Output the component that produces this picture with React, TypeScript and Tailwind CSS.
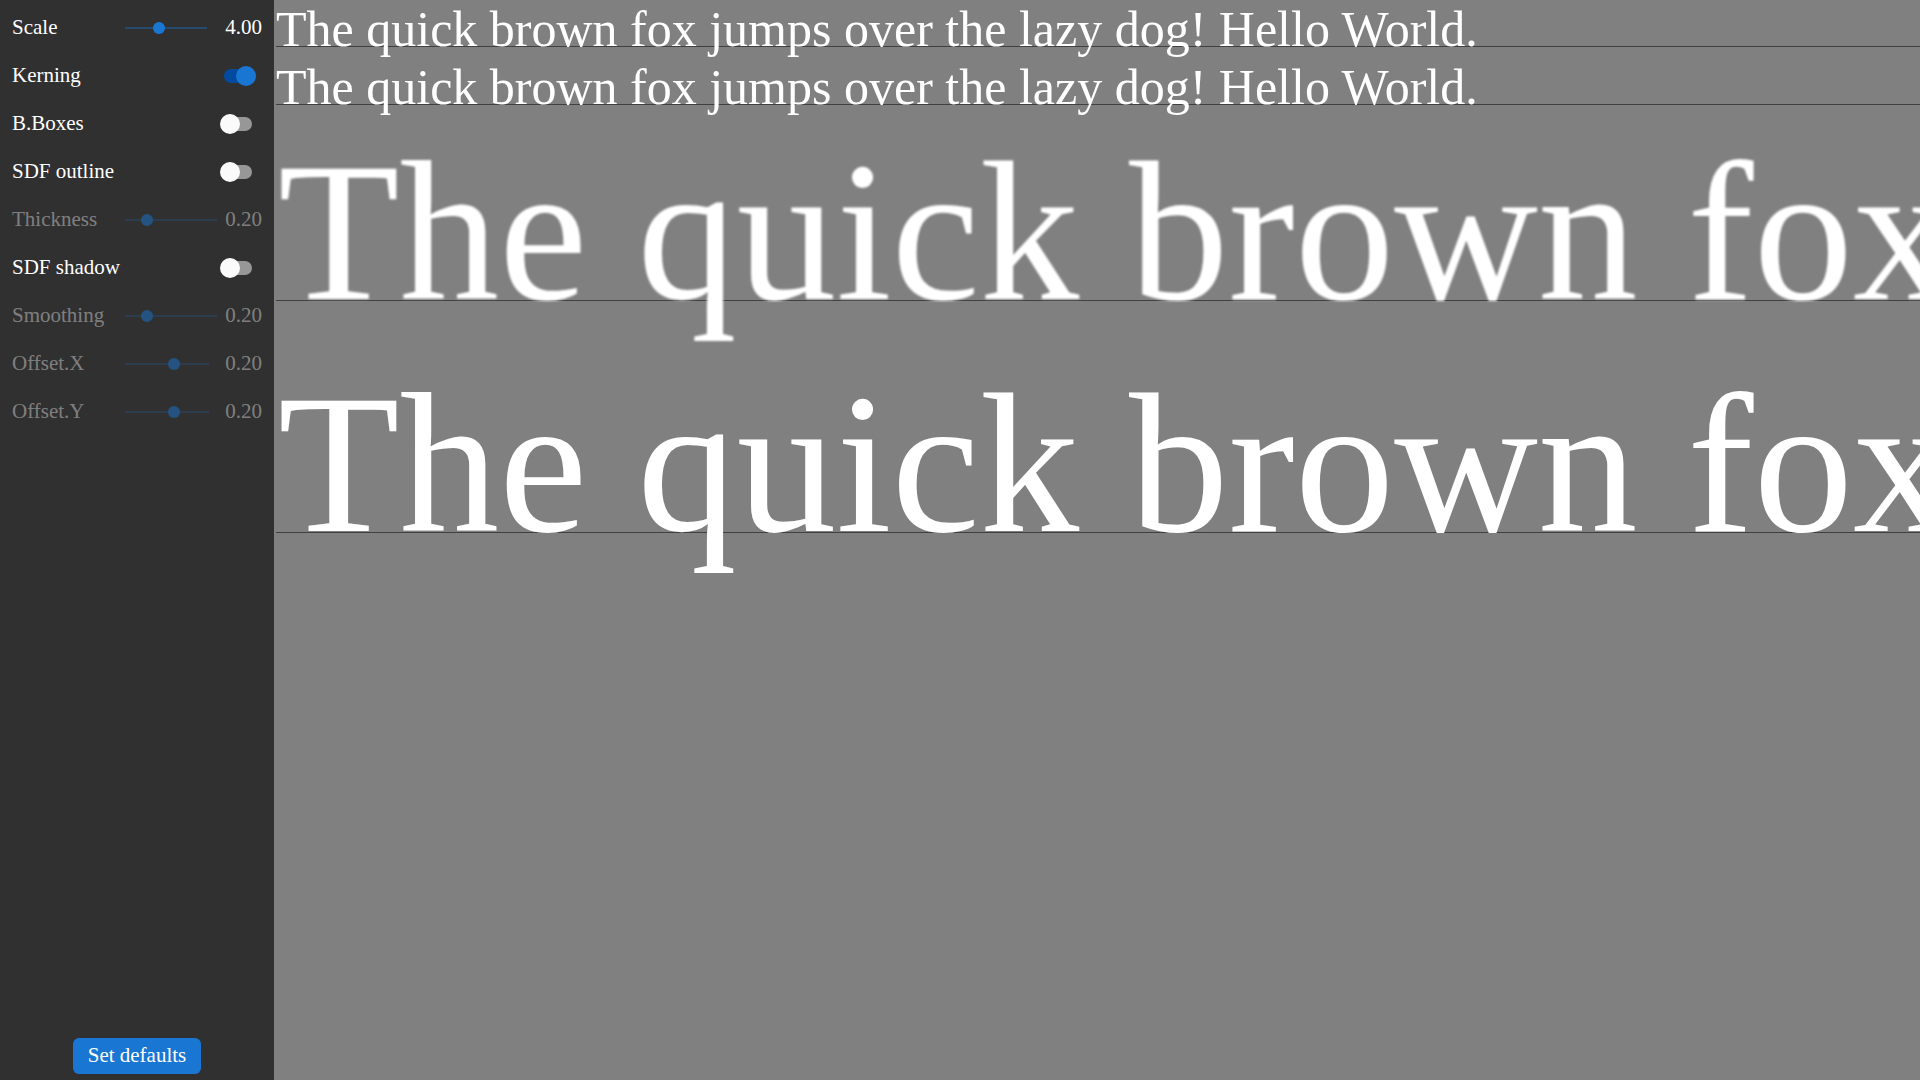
import { useState } from "react";

const SAMPLE = "The quick brown fox jumps over the lazy dog! Hello World.";

function SliderRow({
  id,
  label,
  value,
  min,
  max,
  width,
  disabled = false,
  onChange,
}: {
  id: string;
  label: string;
  value: number;
  min: number;
  max: number;
  width: string;
  disabled?: boolean;
  onChange: (v: number) => void;
}) {
  return (
    <div className={`flex h-12 items-center ${disabled ? "text-white/40" : "text-white"}`}>
      <label htmlFor={id} className="w-[113px] pb-0.5">
        {label}
      </label>
      <input
        id={id}
        type="range"
        min={min}
        max={max}
        step={0.01}
        value={value}
        disabled={disabled}
        onChange={(e) => onChange(Number(e.target.value))}
        className={`h-3 appearance-none bg-transparent disabled:opacity-50 [&::-webkit-slider-runnable-track]:h-0.5 [&::-webkit-slider-runnable-track]:bg-[#274b6e] [&::-webkit-slider-thumb]:-mt-[5px] [&::-webkit-slider-thumb]:size-3 [&::-webkit-slider-thumb]:appearance-none [&::-webkit-slider-thumb]:rounded-full [&::-webkit-slider-thumb]:bg-[#1976d2] ${width}`}
      />
      <output htmlFor={id} className="ml-auto pb-0.5">
        {value.toFixed(2)}
      </output>
    </div>
  );
}

function SwitchRow({
  id,
  label,
  checked,
  onChange,
}: {
  id: string;
  label: string;
  checked: boolean;
  onChange: (v: boolean) => void;
}) {
  return (
    <div className="flex h-12 items-center justify-between text-white">
      <label htmlFor={id} className="pb-0.5">
        {label}
      </label>
      <input
        id={id}
        type="checkbox"
        role="switch"
        checked={checked}
        onChange={(e) => onChange(e.target.checked)}
        className="relative mr-1.5 h-5 w-9 appearance-none before:absolute before:top-[3px] before:left-1 before:h-3.5 before:w-7 before:rounded-full before:bg-[#979797] after:absolute after:top-0 after:left-0 after:size-5 after:rounded-full after:bg-[#fafafa] checked:before:bg-[#004ba0] checked:after:left-4 checked:after:bg-[#1976d2]"
      />
    </div>
  );
}

function TextLine({ large = false, soft = false }: { large?: boolean; soft?: boolean }) {
  return (
    <div
      className={`relative whitespace-nowrap ${
        large ? "text-[199px] leading-[232px]" : "text-[50px] leading-[58px]"
      }`}
    >
      <hr
        className={`absolute inset-x-0 border-t border-[#404040] ${large ? "top-[184px]" : "top-[46px]"}`}
      />
      <p className={`relative ${large ? "pl-0.5" : ""} ${soft ? "blur-[1px]" : ""}`}>{SAMPLE}</p>
    </div>
  );
}

export default function App() {
  const [scale, setScale] = useState(4);
  const [kerning, setKerning] = useState(true);
  const [boxes, setBoxes] = useState(false);
  const [outline, setOutline] = useState(false);
  const [thickness, setThickness] = useState(0.2);
  const [shadow, setShadow] = useState(false);
  const [smoothing, setSmoothing] = useState(0.2);
  const [offsetX, setOffsetX] = useState(0.2);
  const [offsetY, setOffsetY] = useState(0.2);

  const setDefaults = () => {
    setScale(4);
    setKerning(true);
    setBoxes(false);
    setOutline(false);
    setThickness(0.2);
    setShadow(false);
    setSmoothing(0.2);
    setOffsetX(0.2);
    setOffsetY(0.2);
  };

  return (
    <div className="flex h-screen overflow-hidden bg-[#808080] font-['Liberation_Serif',serif]">
      <aside className="flex w-[274px] shrink-0 flex-col bg-[#303030] px-3 pt-1 pb-1.5 text-[21px] leading-6">
        <SliderRow id="scale" label="Scale" value={scale} min={0} max={10} width="w-[82px]" onChange={setScale} />
        <SwitchRow id="kerning" label="Kerning" checked={kerning} onChange={setKerning} />
        <SwitchRow id="boxes" label="B.Boxes" checked={boxes} onChange={setBoxes} />
        <SwitchRow id="outline" label="SDF outline" checked={outline} onChange={setOutline} />
        <SliderRow id="thickness" label="Thickness" value={thickness} min={0} max={1} width="w-[92px]" disabled={!outline} onChange={setThickness} />
        <SwitchRow id="shadow" label="SDF shadow" checked={shadow} onChange={setShadow} />
        <SliderRow id="smoothing" label="Smoothing" value={smoothing} min={0} max={1} width="w-[92px]" disabled={!shadow} onChange={setSmoothing} />
        <SliderRow id="offset-x" label="Offset.X" value={offsetX} min={-1} max={1} width="w-[84px]" disabled={!shadow} onChange={setOffsetX} />
        <SliderRow id="offset-y" label="Offset.Y" value={offsetY} min={-1} max={1} width="w-[84px]" disabled={!shadow} onChange={setOffsetY} />
        <button
          type="button"
          onClick={setDefaults}
          className="mt-auto h-9 self-center rounded-md bg-[#1976d2] px-[15px] pb-0.5 text-white"
        >
          Set defaults
        </button>
      </aside>
      <main className="ml-0.5 min-w-0 flex-1 overflow-hidden text-white">
        <TextLine />
        <TextLine />
        <TextLine large soft />
        <TextLine large />
      </main>
    </div>
  );
}
